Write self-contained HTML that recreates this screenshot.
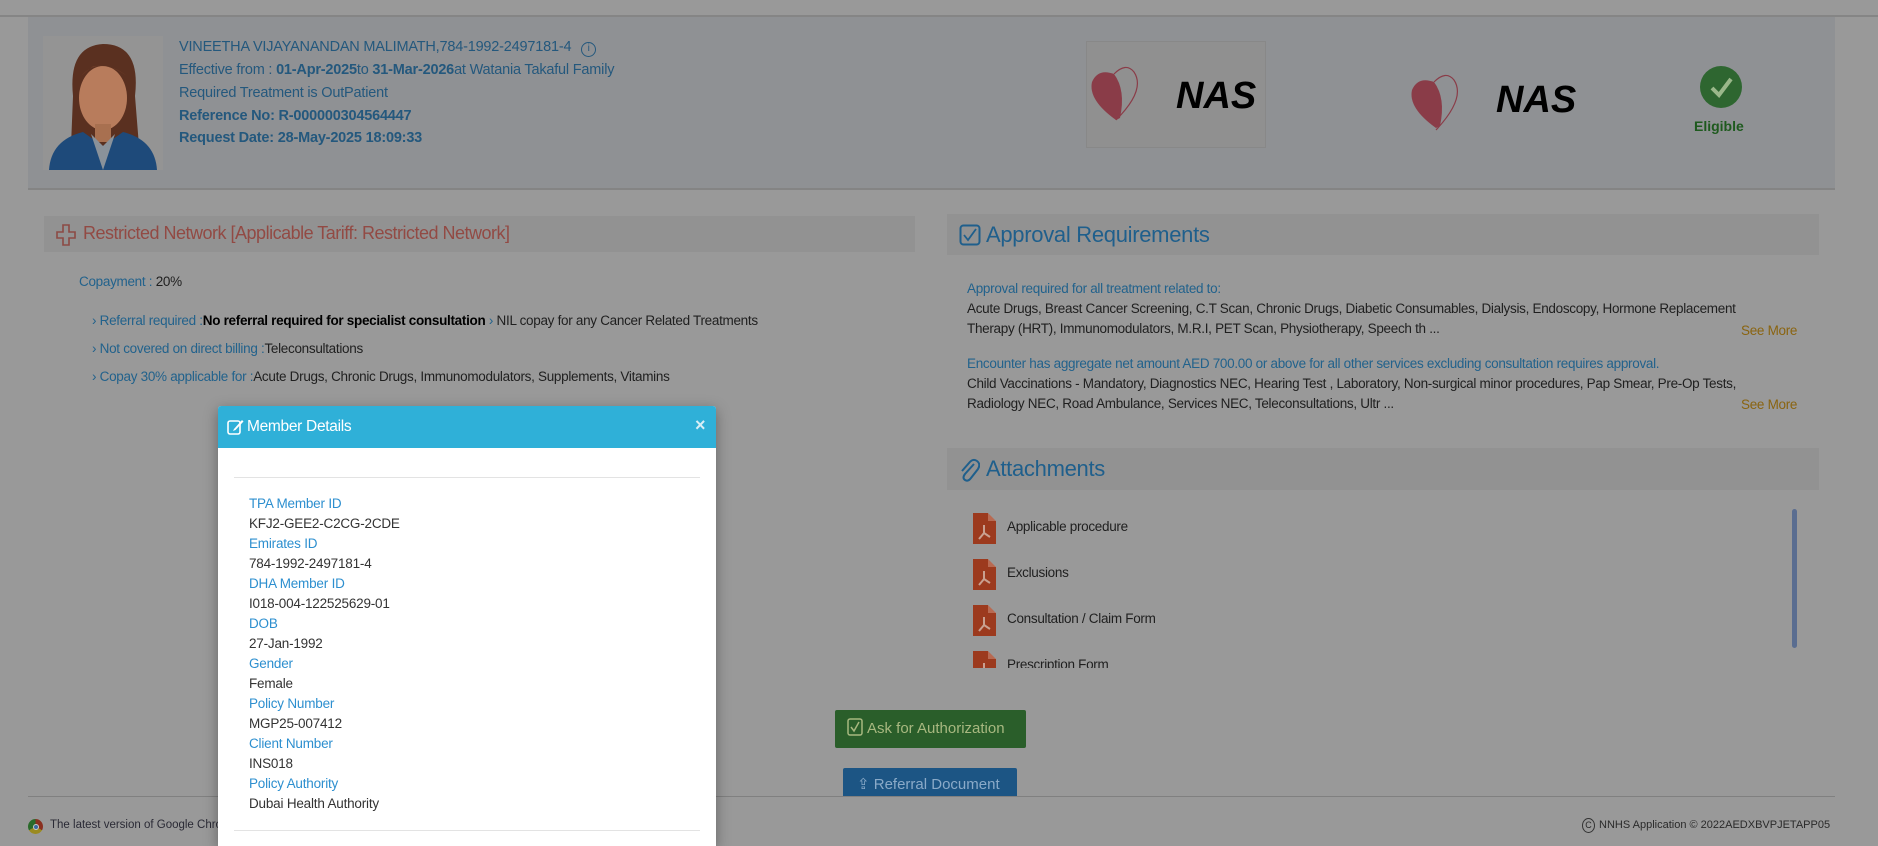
<!DOCTYPE html>
<html><head><meta charset="utf-8"><style>
*{margin:0;padding:0;box-sizing:border-box}
body{width:1878px;height:834px;overflow:hidden;background:#999;font-family:"Liberation Sans",sans-serif;position:relative;color:#1f1f1f}
.a{position:absolute;white-space:nowrap}
.bl{color:#22628c}
.hd{font-size:14.5px;letter-spacing:-0.2px;color:#24587d}
.t{font-size:13.5px;letter-spacing:-0.3px}
.ml{color:#2d8fcf;font-size:13.5px;letter-spacing:-0.2px}
.mv{color:#333;font-size:13.5px;letter-spacing:-0.2px}
.pdf{position:absolute;width:23px;height:31px;background:#9c3a1e}
.pdf:after{content:"";position:absolute;right:0;top:0;border-style:solid;border-width:0 8px 8px 0;border-color:#999 #999 #b86a52 #b86a52}
</style></head><body>
<div class="a" style="left:0;top:15px;width:1878px;height:2px;background:#858585"></div>
<div class="a" style="left:28px;top:17px;width:1807px;height:173px;background:#8f9194;border-bottom:2px solid #848484"></div>

<svg class="a" style="left:43px;top:36px" width="120" height="134" viewBox="0 0 120 134">
<rect width="120" height="134" fill="#949494"/>
<path d="M30 60 Q25 10 60 8 Q98 8 92 60 L96 110 L28 110 Z" fill="#5a3020"/>
<ellipse cx="60" cy="62" rx="24" ry="32" fill="#b87c5c"/>
<path d="M38 40 Q55 20 84 40 Q70 28 50 30 Z" fill="#6a3a26"/>
<rect x="52" y="88" width="16" height="18" fill="#a87050"/>
<path d="M6 134 Q8 104 40 96 L60 110 L80 96 Q112 104 114 134 Z" fill="#1e4a7a"/>
<path d="M48 98 L60 134 L72 98 L60 110 Z" fill="#8a929a"/>
</svg>

<div class="a hd" style="left:179px;top:39px">VINEETHA VIJAYANANDAN MALIMATH,784-1992-2497181-4 <span style="display:inline-block;width:15px;height:15px;border:1.5px solid #24587d;border-radius:50%;font-size:10px;text-align:center;line-height:12px;margin-left:6px">i</span></div>
<div class="a hd" style="left:179px;top:62px">Effective from : <b>01-Apr-2025</b>to <b>31-Mar-2026</b>at Watania Takaful Family</div>
<div class="a hd" style="left:179px;top:85px">Required Treatment is OutPatient</div>
<div class="a hd" style="left:179px;top:108px"><b>Reference No: R-000000304564447</b></div>
<div class="a hd" style="left:179px;top:130px"><b>Request Date: 28-May-2025 18:09:33</b></div>

<div class="a" style="left:1086px;top:41px;width:180px;height:107px;border:1px solid #888;background:#909090"></div>
<svg class="a" style="left:1086px;top:60px" width="180" height="70"><path d="M30 60 Q2 40 6 22 Q12 8 28 14 Q40 30 34 58 Z" fill="#8a3c48"/><path d="M30 60 Q60 30 48 12 Q40 2 28 14" fill="none" stroke="#8a3c48" stroke-width="1.2"/><text x="90" y="48" font-family="Liberation Sans" font-weight="bold" font-style="italic" font-size="38" fill="#000">NAS</text></svg>
<svg class="a" style="left:1406px;top:68px" width="180" height="70"><path d="M30 60 Q2 40 6 22 Q12 8 28 14 Q40 30 34 58 Z" fill="#8a3c48"/><path d="M30 62 Q60 30 48 12 Q40 2 28 14" fill="none" stroke="#8a3c48" stroke-width="1.2"/><text x="90" y="44" font-family="Liberation Sans" font-weight="bold" font-style="italic" font-size="38" fill="#000">NAS</text></svg>
<div class="a" style="left:1700px;top:66px;width:42px;height:42px;border-radius:50%;background:#2e6630"></div>
<svg class="a" style="left:1700px;top:66px" width="42" height="42"><path d="M12 22 L19 29 L31 13" fill="none" stroke="#9ab88a" stroke-width="4"/></svg>
<div class="a" style="left:1694px;top:118px;font-size:14px;font-weight:bold;color:#1e5a1e">Eligible</div>

<div class="a" style="left:44px;top:216px;width:871px;height:36px;background:#929292"></div>
<svg class="a" style="left:56px;top:224px" width="20" height="22"><path d="M7 1h6v7h6v6h-6v7h-6v-7h-6v-6h6z" fill="none" stroke="#8c4a44" stroke-width="1.6"/></svg>
<div class="a" style="left:83px;top:223px;font-size:18px;letter-spacing:-0.5px;color:#924a44">Restricted Network [Applicable Tariff: Restricted Network]</div>
<div class="a t" style="left:79px;top:274px"><span class="bl">Copayment :</span> 20%</div>
<div class="a t" style="left:92px;top:313px"><span class="bl">› Referral required :</span><b style="color:#000">No referral required for specialist consultation</b> <span class="bl">›</span> NIL copay for any Cancer Related Treatments</div>
<div class="a t" style="left:92px;top:341px"><span class="bl">› Not covered on direct billing :</span>Teleconsultations</div>
<div class="a t" style="left:92px;top:369px"><span class="bl">› Copay 30% applicable for :</span>Acute Drugs, Chronic Drugs, Immunomodulators, Supplements, Vitamins</div>

<div class="a" style="left:947px;top:214px;width:872px;height:41px;background:#929292"></div>
<svg class="a" style="left:959px;top:224px" width="22" height="22"><rect x="1.5" y="1.5" width="19" height="19" rx="3" fill="none" stroke="#1f5f8c" stroke-width="2"/><path d="M5 11 L9 16 L17 5" fill="none" stroke="#1f5f8c" stroke-width="1.8"/></svg>
<div class="a" style="left:986px;top:222px;font-size:22px;letter-spacing:-0.3px;color:#1f5f8c">Approval Requirements</div>
<div class="a t bl" style="left:967px;top:281px">Approval required for all treatment related to:</div>
<div class="a t" style="left:967px;top:301px">Acute Drugs, Breast Cancer Screening, C.T Scan, Chronic Drugs, Diabetic Consumables, Dialysis, Endoscopy, Hormone Replacement</div>
<div class="a t" style="left:967px;top:321px">Therapy (HRT), Immunomodulators, M.R.I, PET Scan, Physiotherapy, Speech th ...</div>
<div class="a t" style="left:1741px;top:323px;color:#8a6410">See More</div>
<div class="a t bl" style="left:967px;top:356px">Encounter has aggregate net amount AED 700.00 or above for all other services excluding consultation requires approval.</div>
<div class="a t" style="left:967px;top:376px">Child Vaccinations - Mandatory, Diagnostics NEC, Hearing Test , Laboratory, Non-surgical minor procedures, Pap Smear, Pre-Op Tests,</div>
<div class="a t" style="left:967px;top:396px">Radiology NEC, Road Ambulance, Services NEC, Teleconsultations, Ultr ...</div>
<div class="a t" style="left:1741px;top:397px;color:#8a6410">See More</div>

<div class="a" style="left:947px;top:448px;width:872px;height:42px;background:#929292"></div>
<svg class="a" style="left:958px;top:458px" width="22" height="24"><path d="M16 6 L7 16 Q4 20 7 22 Q10 24 13 20 L20 11 Q23 6 19 3 Q15 0 11 5 L4 13" fill="none" stroke="#1f5f8c" stroke-width="2"/></svg>
<div class="a" style="left:986px;top:456px;font-size:22px;letter-spacing:-0.3px;color:#1f5f8c">Attachments</div>
<div style="position:absolute;left:940px;top:505px;width:880px;height:163px;overflow:hidden">
<div class="pdf" style="left:33px;top:8px"><svg width="23" height="31"><path d="M11 12 L11 20 L6 26 M11 20 L17 24" fill="none" stroke="#c9a090" stroke-width="2"/></svg></div><div class="a t" style="left:67px;top:14px">Applicable procedure</div>
<div class="pdf" style="left:33px;top:54px"><svg width="23" height="31"><path d="M11 12 L11 20 L6 26 M11 20 L17 24" fill="none" stroke="#c9a090" stroke-width="2"/></svg></div><div class="a t" style="left:67px;top:60px">Exclusions</div>
<div class="pdf" style="left:33px;top:100px"><svg width="23" height="31"><path d="M11 12 L11 20 L6 26 M11 20 L17 24" fill="none" stroke="#c9a090" stroke-width="2"/></svg></div><div class="a t" style="left:67px;top:106px">Consultation / Claim Form</div>
<div class="pdf" style="left:33px;top:146px"><svg width="23" height="31"><path d="M11 12 L11 20 L6 26 M11 20 L17 24" fill="none" stroke="#c9a090" stroke-width="2"/></svg></div><div class="a t" style="left:67px;top:152px">Prescription Form</div>
</div>
<div class="a" style="left:1792px;top:509px;width:5px;height:139px;border-radius:3px;background:#5a6d90"></div>

<div class="a" style="left:835px;top:710px;width:191px;height:38px;background:#2a5e2a;border-radius:2px;color:#a8b880;font-size:15px;line-height:38px;padding-left:12px"><svg width="16" height="18" style="vertical-align:-3px;margin-right:4px"><rect x="1" y="1" width="14" height="16" rx="2" fill="none" stroke="#a8b880" stroke-width="1.5"/><path d="M4 9 L7 13 L12 4" fill="none" stroke="#a8b880" stroke-width="1.5"/></svg>Ask for Authorization</div>
<div class="a" style="left:843px;top:768px;width:174px;height:28px;background:#1c5584;border-radius:2px 2px 0 0;color:#8aaac8;font-size:15px;line-height:34px;padding-left:14px;overflow:hidden">⇪ Referral Document</div>

<div class="a" style="left:28px;top:796px;width:1807px;height:1px;background:#808080"></div>
<div class="a" style="left:28px;top:819px;width:15px;height:15px;border-radius:50%;background:conic-gradient(#8a3020 0 120deg,#9a8a20 120deg 240deg,#2a6a2a 240deg)"></div>
<div class="a" style="left:33px;top:824px;width:6px;height:6px;border-radius:50%;background:#3a6aa0;border:1px solid #ccc"></div>
<div class="a" style="left:50px;top:819px;font-size:11.5px;color:#2a2a35">The latest version of Google Chrome</div>
<div class="a" style="left:1582px;top:818px;font-size:11px;color:#2a2a2a"><span style="display:inline-block;width:13px;height:15px;border:1px solid #333;border-radius:50%;font-size:9px;text-align:center;line-height:13px;margin-right:4px">C</span>NNHS Application © 2022AEDXBVPJETAPP05</div>

<div class="a" style="left:218px;top:406px;width:498px;height:440px;background:#fff;box-shadow:0 4px 14px rgba(0,0,0,.35);border-radius:3px 3px 0 0">
<div style="height:42px;background:#2fb0d8;border-radius:3px 3px 0 0;position:relative">
<svg style="position:absolute;left:9px;top:12px" width="17" height="18"><rect x="1" y="3" width="12" height="13" rx="2" fill="none" stroke="#fff" stroke-width="1.6"/><path d="M7 11 L15 2 L16.5 3.5 L8.5 12 L6 13 Z" fill="#fff"/></svg>
<div style="position:absolute;left:29px;top:12px;color:#fff;font-size:15.5px;letter-spacing:-0.3px">Member Details</div>
<div style="position:absolute;left:477px;top:9px;color:#d8eef6;font-size:18px;font-weight:bold">×</div>
</div>
<div style="position:absolute;left:16px;top:71px;width:466px;height:1px;background:#e3e3e3"></div>
<div class="a ml" style="left:31px;top:90px">TPA Member ID</div>
<div class="a mv" style="left:31px;top:110px">KFJ2-GEE2-C2CG-2CDE</div>
<div class="a ml" style="left:31px;top:130px">Emirates ID</div>
<div class="a mv" style="left:31px;top:150px">784-1992-2497181-4</div>
<div class="a ml" style="left:31px;top:170px">DHA Member ID</div>
<div class="a mv" style="left:31px;top:190px">I018-004-122525629-01</div>
<div class="a ml" style="left:31px;top:210px">DOB</div>
<div class="a mv" style="left:31px;top:230px">27-Jan-1992</div>
<div class="a ml" style="left:31px;top:250px">Gender</div>
<div class="a mv" style="left:31px;top:270px">Female</div>
<div class="a ml" style="left:31px;top:290px">Policy Number</div>
<div class="a mv" style="left:31px;top:310px">MGP25-007412</div>
<div class="a ml" style="left:31px;top:330px">Client Number</div>
<div class="a mv" style="left:31px;top:350px">INS018</div>
<div class="a ml" style="left:31px;top:370px">Policy Authority</div>
<div class="a mv" style="left:31px;top:390px">Dubai Health Authority</div>
<div style="position:absolute;left:16px;top:424px;width:466px;height:1px;background:#e3e3e3"></div>
</div>
</body></html>
